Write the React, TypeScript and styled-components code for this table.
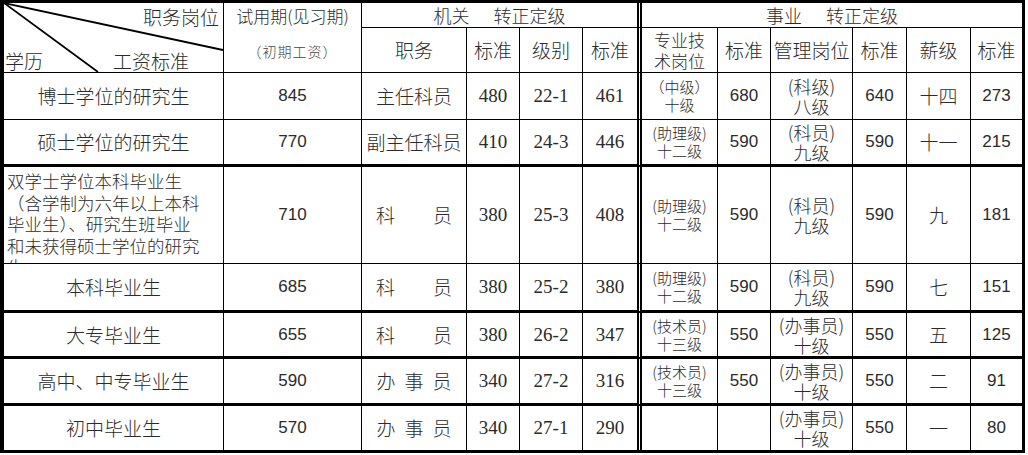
import { createGlobalStyle, styled } from 'styled-components'

const GlobalStyle = createGlobalStyle`
  html, body { margin: 0; padding: 0; background: #fff; }
  body { width: 1028px; height: 455px; overflow: hidden; }
  *, *::before, *::after { box-sizing: border-box; }
`

const CJK = '"Noto Sans CJK SC", sans-serif'
const SANS = '"Liberation Sans", "Noto Sans CJK SC", sans-serif'
const SERIF = '"Liberation Serif", "Noto Sans CJK SC", serif'

type Face = 'cjk' | 'sans' | 'serif'
type Edge = 'thin' | 'thick' | 'none'

const faceOf = (f?: Face) => (f === 'sans' ? SANS : f === 'serif' ? SERIF : CJK)

const Sheet = styled.table`
  border-collapse: separate;
  border-spacing: 0;
  table-layout: fixed;
  width: 1025px;
  border-top: 3px solid #000;
  border-left: 4px solid #000;
  border-right: 3px solid #000;
  border-bottom: 3px solid #000;
  color: #2b2b2b;
  font-family: ${CJK};
  font-weight: 300;
  font-size: 19px;
`

const Row = styled.tr<{ $h: number }>`
  height: ${p => p.$h}px;
`

const Cell = styled.td<{
  $edge?: Edge
  $double?: boolean
  $last?: boolean
  $face?: Face
  $size?: number
  $top?: boolean
}>`
  padding: 0;
  border-right: ${p => (p.$double ? '5px double #000' : p.$last ? 'none' : '1px solid #000')};
  border-bottom: ${p =>
    p.$edge === 'thick' ? '3px solid #000' : p.$edge === 'none' ? 'none' : '1px solid #000'};
  text-align: center;
  vertical-align: ${p => (p.$top ? 'top' : 'middle')};
  white-space: nowrap;
  font-family: ${p => faceOf(p.$face)};
  font-weight: ${p => (p.$face === 'sans' || p.$face === 'serif' ? 400 : 300)};
  font-size: ${p => p.$size ?? 19}px;
  line-height: 22px;
`

const Corner = styled.div`
  position: relative;
  height: 69px;
  display: flex;
  flex-direction: column;
  justify-content: space-between;
`

const CornerTop = styled.div`
  text-align: right;
  padding: 2px 4px 0 0;
  line-height: 24px;
`

const CornerBottom = styled.div`
  display: flex;
  justify-content: space-between;
  padding: 0 34px 0 1px;
  line-height: 22px;
`

const Diagonals = styled.svg`
  position: absolute;
  left: 0;
  top: 0;
  pointer-events: none;
`

const Trial = styled.div`
  display: flex;
  flex-direction: column;
  align-items: center;
  gap: 16px;
  padding-top: 3px;
`

const TrialTitle = styled.span`
  font-size: 17px;
  line-height: 20px;
`

const TrialSub = styled.span`
  font-size: 14px;
  line-height: 18px;
  letter-spacing: 1px;
  color: #444;
`

const Spacer = styled.span`
  display: inline-block;
  width: 24px;
`

const Stack = styled.div<{ $size: number; $lh: number }>`
  display: flex;
  flex-direction: column;
  align-items: center;
  font-size: ${p => p.$size}px;
  line-height: ${p => p.$lh}px;
`

const Tracked = styled.span<{ $gap: number }>`
  letter-spacing: ${p => p.$gap}px;
  padding-left: ${p => p.$gap}px;
`

const Wrapped = styled.div`
  height: 96px;
  overflow: hidden;
  text-align: left;
  padding: 3px 0 0 3px;
  font-size: 17.5px;
  line-height: 21.5px;
  white-space: nowrap;
`

type Post = { text: string; gap: number }

type Item = {
  edu: string | string[]
  trial: string
  post: Post
  s1: string
  lvl: string
  s2: string
  tech: string[] | null
  s3: string
  mgmt: string[]
  s4: string
  pay: string
  s5: string
  h: number
  edge: Edge
}

const KEYUAN: Post = { text: '科　　员', gap: 0 }
const BANSHI: Post = { text: '办事员', gap: 9 }

const rows: Item[] = [
  {
    edu: '博士学位的研究生', trial: '845', post: { text: '主任科员', gap: 0 },
    s1: '480', lvl: '22-1', s2: '461', tech: ['（中级）', '十级'], s3: '680',
    mgmt: ['(科级)', '八级'], s4: '640', pay: '十四', s5: '273', h: 47, edge: 'thin',
  },
  {
    edu: '硕士学位的研究生', trial: '770', post: { text: '副主任科员', gap: 0 },
    s1: '410', lvl: '24-3', s2: '446', tech: ['(助理级)', '十二级'], s3: '590',
    mgmt: ['(科员)', '九级'], s4: '590', pay: '十一', s5: '215', h: 47, edge: 'thick',
  },
  {
    edu: [
      '双学士学位本科毕业生',
      '（含学制为六年以上本科',
      '毕业生）、研究生班毕业',
      '和未获得硕士学位的研究',
      '生',
    ],
    trial: '710', post: KEYUAN, s1: '380', lvl: '25-3', s2: '408',
    tech: ['(助理级)', '十二级'], s3: '590', mgmt: ['(科员)', '九级'], s4: '590',
    pay: '九', s5: '181', h: 97, edge: 'thin',
  },
  {
    edu: '本科毕业生', trial: '685', post: KEYUAN, s1: '380', lvl: '25-2', s2: '380',
    tech: ['(助理级)', '十二级'], s3: '590', mgmt: ['(科员)', '九级'], s4: '590',
    pay: '七', s5: '151', h: 49, edge: 'thick',
  },
  {
    edu: '大专毕业生', trial: '655', post: KEYUAN, s1: '380', lvl: '26-2', s2: '347',
    tech: ['(技术员)', '十三级'], s3: '550', mgmt: ['(办事员)', '十级'], s4: '550',
    pay: '五', s5: '125', h: 46, edge: 'thick',
  },
  {
    edu: '高中、中专毕业生', trial: '590', post: BANSHI, s1: '340', lvl: '27-2', s2: '316',
    tech: ['(技术员)', '十三级'], s3: '550', mgmt: ['(办事员)', '十级'], s4: '550',
    pay: '二', s5: '91', h: 47, edge: 'thick',
  },
  {
    edu: '初中毕业生', trial: '570', post: BANSHI, s1: '340', lvl: '27-1', s2: '290',
    tech: null, s3: '', mgmt: ['(办事员)', '十级'], s4: '550',
    pay: '一', s5: '80', h: 44, edge: 'none',
  },
]

const widths = [220, 138, 105, 53, 63, 59, 76, 53, 82, 54, 64, 51]

function Lines({ lines, size, lh }: { lines: string[]; size: number; lh: number }) {
  return (
    <Stack $size={size} $lh={lh}>
      {lines.map(l => (
        <span key={l}>{l}</span>
      ))}
    </Stack>
  )
}

export default function App() {
  return (
    <>
      <GlobalStyle />
      <Sheet>
        <colgroup>
          {widths.map((w, i) => (
            <col key={i} style={{ width: w }} />
          ))}
        </colgroup>
        <thead>
          <Row $h={25}>
            <Cell rowSpan={2} $top>
              <Corner>
                <Diagonals width={219} height={69} viewBox="0 0 219 69">
                  <line x1={0} y1={0} x2={219} y2={47} stroke="#000" strokeWidth={1.8} />
                  <line x1={0} y1={0} x2={94} y2={69} stroke="#000" strokeWidth={1.8} />
                </Diagonals>
                <CornerTop>职务岗位</CornerTop>
                <CornerBottom>
                  <span>学历</span>
                  <span>工资标准</span>
                </CornerBottom>
              </Corner>
            </Cell>
            <Cell rowSpan={2} $top>
              <Trial>
                <TrialTitle>试用期(见习期)</TrialTitle>
                <TrialSub>（初期工资）</TrialSub>
              </Trial>
            </Cell>
            <Cell colSpan={4} $double $size={18}>
              机关<Spacer />转正定级
            </Cell>
            <Cell colSpan={6} $last $size={18}>
              事业<Spacer />转正定级
            </Cell>
          </Row>
          <Row $h={45}>
            <Cell>职务</Cell>
            <Cell>标准</Cell>
            <Cell>级别</Cell>
            <Cell $double>标准</Cell>
            <Cell>
              <Lines lines={['专业技', '术岗位']} size={17} lh={21} />
            </Cell>
            <Cell>标准</Cell>
            <Cell>管理岗位</Cell>
            <Cell>标准</Cell>
            <Cell>薪级</Cell>
            <Cell $last>标准</Cell>
          </Row>
        </thead>
        <tbody>
          {rows.map((r, i) => (
            <Row key={i} $h={r.h}>
              {Array.isArray(r.edu) ? (
                <Cell $edge={r.edge} $top>
                  <Wrapped>
                    {r.edu.map(l => (
                      <div key={l}>{l}</div>
                    ))}
                  </Wrapped>
                </Cell>
              ) : (
                <Cell $edge={r.edge}>{r.edu}</Cell>
              )}
              <Cell $edge={r.edge} $face="sans" $size={17}>{r.trial}</Cell>
              <Cell $edge={r.edge}>
                {r.post.gap ? <Tracked $gap={r.post.gap}>{r.post.text}</Tracked> : r.post.text}
              </Cell>
              <Cell $edge={r.edge} $face="serif">{r.s1}</Cell>
              <Cell $edge={r.edge} $face="serif">{r.lvl}</Cell>
              <Cell $edge={r.edge} $face="serif" $double>{r.s2}</Cell>
              <Cell $edge={r.edge}>
                {r.tech && <Lines lines={r.tech} size={15} lh={18} />}
              </Cell>
              <Cell $edge={r.edge} $face="sans" $size={17}>{r.s3}</Cell>
              <Cell $edge={r.edge}>
                <Lines lines={r.mgmt} size={18} lh={20} />
              </Cell>
              <Cell $edge={r.edge} $face="sans" $size={17}>{r.s4}</Cell>
              <Cell $edge={r.edge}>{r.pay}</Cell>
              <Cell $edge={r.edge} $face="sans" $size={17} $last>{r.s5}</Cell>
            </Row>
          ))}
        </tbody>
      </Sheet>
    </>
  )
}
